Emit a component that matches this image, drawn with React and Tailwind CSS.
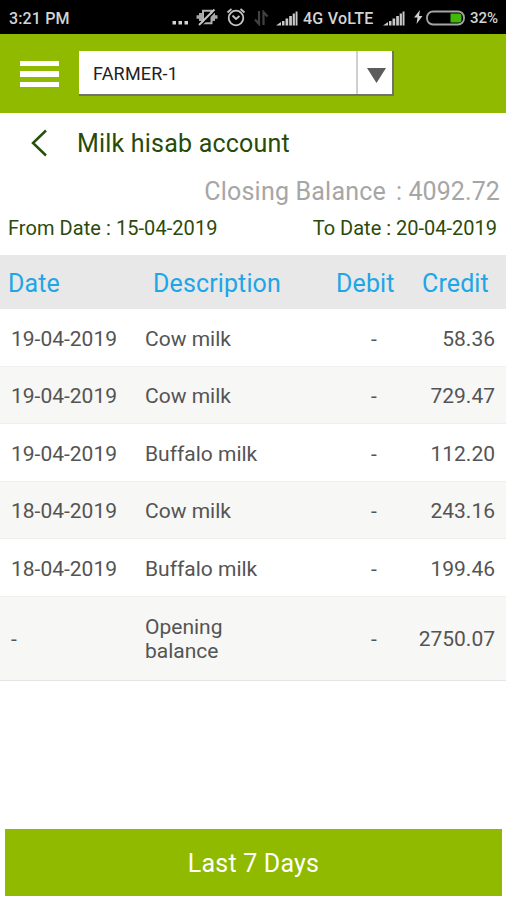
const rows = [
  ['19-04-2019', 'Cow milk', '-', '58.36'],
  ['19-04-2019', 'Cow milk', '-', '729.47'],
  ['19-04-2019', 'Buffalo milk', '-', '112.20'],
  ['18-04-2019', 'Cow milk', '-', '243.16'],
  ['18-04-2019', 'Buffalo milk', '-', '199.46'],
  ['-', 'Opening balance', '-', '2750.07'],
];

function Signal({ className }) {
  return (
    <svg className={className} width="22" height="15" viewBox="0 0 22 15" fill="#c8c8c8">
      <path d="M0 14.500 5 11v3.500zM6 10h2.500v4.500H6zM9.500 7.500h2.700v7H9.500zM13.200 5h2.700v9.500h-2.700zM16.700 2.500h2.200v12h-2.200zM19.600.5h1.900v14h-1.900z" />
    </svg>
  );
}

function StatusBar() {
  return (
    <header className="flex h-[34px] items-center bg-black pl-[9px] pt-[2px] text-[16px] font-medium leading-none text-[#d4d4d4]">
      <span className="w-[163px] pt-px tracking-[0.15px]">3:21 PM</span>
      <svg width="17" height="16" viewBox="0 0 17 16" fill="#d4d4d4">
        <path d="M.5 11H4v3.500H.5zM6.500 11H10v3.500H6.500zM12.500 11H16v3.500h-3.500z" />
      </svg>
      <svg className="-mt-[2px] ml-[7px]" width="22" height="18" viewBox="0 0 22 18">
        <path d="M7 2.800h8.500v12.400H7z" fill="none" stroke="#b0b0b0" strokeWidth="2" />
        <path d="M3 5h4v8H3zM15.500 5h3.500v8h-3.500zM.5 7.300H3v3.400H.5zM19 7.300h2.500v3.400H19z" fill="#a8a8a8" />
        <path d="M5 17.500 19.500 3" stroke="#000" strokeWidth="1.600" />
        <path d="M3 17 18.500 1.500" stroke="#c4c4c4" strokeWidth="2" />
      </svg>
      <svg className="-mt-[3px] ml-[8px]" width="20" height="20" viewBox="0 0 20 20" fill="none" stroke="#c4c4c4" strokeWidth="1.800">
        <circle cx="10" cy="11" r="7.300" />
        <path d="M6.500 8.500 10 12l3.500-3M1.500 5.500 5.500 2M18.500 5.500 14.500 2" />
      </svg>
      <svg className="ml-[8px]" width="15" height="16" viewBox="0 0 15 16" fill="none" stroke="#414141" strokeWidth="2.200">
        <path d="M5 1v13L1 9.500M9.500 15V2l4 4.500" />
      </svg>
      <Signal className="ml-[7px]" />
      <span className="ml-[5px] w-[80px] whitespace-nowrap pt-px tracking-[0.25px]">4G VoLTE</span>
      <Signal />
      <svg className="-mt-[2px] ml-[9px]" width="9" height="14" viewBox="0 0 9 14" fill="#d0d0d0">
        <path d="M6 0 0 7.500h3.500L2.500 14 8.500 6H5z" />
      </svg>
      <svg className="-mt-px ml-[3px]" width="39" height="16" viewBox="0 0 39 16">
        <rect x="1" y="1.500" width="37" height="13" rx="6" fill="none" stroke="#a5a5a5" strokeWidth="1.800" />
        <path d="M24.500 3.500H33q2.500 0 2.500 2.500v4q0 2.500-2.500 2.500h-8.500z" fill="#42b80a" />
      </svg>
      <span className="ml-[5px] pt-px text-[15px]">32%</span>
    </header>
  );
}

export default function App() {
  return (
    <div className="flex h-[900px] w-[506px] flex-col overflow-hidden bg-white font-[Roboto,sans-serif]">
      <StatusBar />
      <nav className="flex h-[79px] items-center bg-[#8fba00] pl-[20px]">
        <div className="flex w-[39px] flex-col gap-[5px] pt-px">
          <span className="h-[5.500px] bg-white" />
          <span className="h-[5.500px] bg-white" />
          <span className="h-[5.500px] bg-white" />
        </div>
        <div className="ml-[20px] flex h-[45px] w-[315px] border-b-2 border-r-2 border-[#6f7566] bg-white">
          <span className="flex flex-1 items-center pl-[14px] pt-[2px] text-[18px] tracking-[0.2px] text-[#222]">FARMER-1</span>
          <span className="flex w-[36px] items-center justify-center border-l-2 border-[#d0d0d0] pl-[2px] pt-[6px]">
            <svg width="19" height="15" viewBox="0 0 20 15" preserveAspectRatio="none" fill="#5c5c5c"><path d="M0 0h20L10 15z" /></svg>
          </span>
        </div>
      </nav>
      <div className="flex h-[60px] items-center pl-[31px] text-[#274a08]">
        <svg width="17" height="28" viewBox="0 0 17 28" fill="none" stroke="#24520c" strokeWidth="2.500">
          <path d="M15 1.500 2 14l13 12.500" />
        </svg>
        <h1 className="ml-[29px] pt-[2px] text-[25px] tracking-[0.2px]">Milk hisab account</h1>
      </div>
      <div className="flex h-[36px] items-center justify-end pr-[6px] pt-px text-[25px] text-[#a6a6a6]">
        <span className="tracking-[0.2px]">Closing Balance</span>
        <span className="ml-[10px] tracking-[0.1px]">: 4092.72</span>
      </div>
      <div className="flex h-[46px] items-start justify-between pl-[8px] pr-[9px] pt-[4px] text-[20px] text-[#2c4a0a]">
        <span className="tracking-[0.06px]">From Date : 15-04-2019</span>
        <span>To Date : 20-04-2019</span>
      </div>
      <div className="flex h-[54px] items-center bg-[#e8e8e8] pl-[8px] pt-[3px] text-[25px] tracking-[0.12px] text-[#20a5e6]">
        <span className="w-[145px]">Date</span>
        <span className="w-[183px]">Description</span>
        <span className="w-[86px]">Debit</span>
        <span>Credit</span>
      </div>
      <div>
        {rows.map(([date, description, debit, credit]) => (
          <div
            key={date + credit}
            className="flex h-[57.600px] items-center border-b border-[#efefee] px-[11px] pt-[3px] text-[21px] leading-[24.500px] text-[#545454] odd:bg-white even:bg-[#f7f7f5] last:h-[84px] last:border-[#e6e6e6] last:pt-[2px]"
          >
            <span className="w-[134px]">{date}</span>
            <span className="w-[125px]">{description}</span>
            <span className="w-[101px] pl-[101px]">{debit}</span>
            <span className="flex-1 text-right">{credit}</span>
          </div>
        ))}
      </div>
      <footer className="mt-auto pb-[4px] pl-[5px] pr-[4px]">
        <button className="h-[67px] w-full bg-[#8fba00] pt-[3px] text-[25px] tracking-[0.2px] text-white">Last 7 Days</button>
      </footer>
    </div>
  );
}
